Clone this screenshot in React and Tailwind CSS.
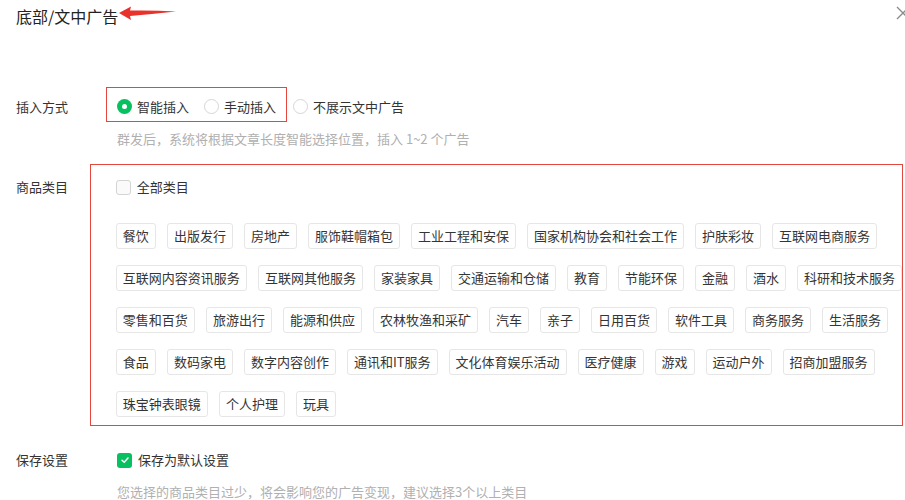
import React from "react";

const rows = [
  ["餐饮", "出版发行", "房地产", "服饰鞋帽箱包", "工业工程和安保", "国家机构协会和社会工作", "护肤彩妆", "互联网电商服务"],
  ["互联网内容资讯服务", "互联网其他服务", "家装家具", "交通运输和仓储", "教育", "节能环保", "金融", "酒水", "科研和技术服务"],
  ["零售和百货", "旅游出行", "能源和供应", "农林牧渔和采矿", "汽车", "亲子", "日用百货", "软件工具", "商务服务", "生活服务"],
  ["食品", "数码家电", "数字内容创作", "通讯和IT服务", "文化体育娱乐活动", "医疗健康", "游戏", "运动户外", "招商加盟服务"],
  ["珠宝钟表眼镜", "个人护理", "玩具"],
];

function Radio({ checked, label }) {
  return (
    <div className="flex items-center gap-[5px]">
      {checked ? (
        <span className="w-[15px] h-[15px] rounded-full bg-[#07c160] flex items-center justify-center">
          <span className="w-[5px] h-[5px] rounded-full bg-white" />
        </span>
      ) : (
        <span className="w-[15px] h-[15px] rounded-full border border-[#d6d6d6] bg-white" />
      )}
      <span className="text-[13px] leading-5 text-[#333]">{label}</span>
    </div>
  );
}

function Tag({ label }) {
  return (
    <span className="h-[26px] px-[6px] flex items-center border border-[#e6e6e6] rounded-[3px] bg-white text-[13px] text-[#353535] whitespace-nowrap">
      {label}
    </span>
  );
}

export default function App() {
  return (
    <div
      className="w-[905px] h-[500px] bg-white relative overflow-hidden pl-4"
      style={{ fontFamily: '"Noto Sans CJK SC", "Noto Sans", sans-serif' }}
    >
      <svg className="absolute left-[896px] top-[6px]" width="14" height="14" viewBox="0 0 14 14">
        <path d="M1 1L13 13M13 1L1 13" stroke="#8a8a8a" strokeWidth="1.3" />
      </svg>

      <div className="h-[32px] flex items-center">
        <span className="text-[16px] text-[#222] leading-6">底部/文中广告</span>
        <svg width="58" height="16" viewBox="0 0 58 16" className="ml-[1px] -mt-[5px]">
          <path d="M0 7 L12 0.5 L11 4.5 Q34 4 57 5.5 Q34 8 11 10 L12 14 Z" fill="#e8322b" />
        </svg>
      </div>

      <div className="mt-[55px] h-[35px] flex items-stretch">
        <span className="w-[90px] pt-[4px] flex items-center text-[13px] text-[#333]">插入方式</span>
        <div className="flex items-center gap-[15px] border-[1.5px] border-[#e5473f] pl-[10px] pr-[10px] pt-[4px]">
          <Radio checked label="智能插入" />
          <Radio label="手动插入" />
        </div>
        <div className="ml-[6px] pt-[4px] flex items-center">
          <Radio label="不展示文中广告" />
        </div>
      </div>

      <div className="mt-[7px] ml-[101px] text-[13px] leading-5 text-[#b0b0b0]">
        群发后，系统将根据文章长度智能选择位置，插入 1~2 个广告
      </div>

      <div className="mt-[15px] flex items-start">
        <span className="w-[74px] mt-[13px] text-[13px] leading-5 text-[#333]">商品类目</span>
        <div className="flex-1 mr-[2px] border-[1.5px] border-[#e5473f] pl-[25px] pt-[12px] pb-[8px]">
          <div className="flex items-center gap-[6px] h-5">
            <span className="w-[15px] h-[15px] rounded-[3px] border border-[#d4d4d4] bg-[#fafafa]" />
            <span className="text-[13px] text-[#333]">全部类目</span>
          </div>
          <div className="mt-[26px] flex flex-col gap-[16px]">
            {rows.map((r, i) => (
              <div key={i} className="flex gap-[11px]">
                {r.map((t) => (
                  <Tag key={t} label={t} />
                ))}
              </div>
            ))}
          </div>
        </div>
      </div>

      <div className="mt-[24px] h-5 flex items-center">
        <span className="w-[101px] text-[13px] text-[#333]">保存设置</span>
        <div className="flex items-center gap-[6px]">
          <span className="w-[15px] h-[15px] rounded-[3px] bg-[#07c160] flex items-center justify-center">
            <svg width="10" height="10" viewBox="0 0 10 10">
              <path d="M2 5.2L4.2 7.2L8 3" stroke="white" strokeWidth="1.5" fill="none" strokeLinecap="round" strokeLinejoin="round" />
            </svg>
          </span>
          <span className="text-[13px] text-[#333]">保存为默认设置</span>
        </div>
      </div>

      <div className="mt-[12px] ml-[101px] text-[13px] leading-5 text-[#b0b0b0]">
        您选择的商品类目过少，将会影响您的广告变现，建议选择3个以上类目
      </div>
    </div>
  );
}
